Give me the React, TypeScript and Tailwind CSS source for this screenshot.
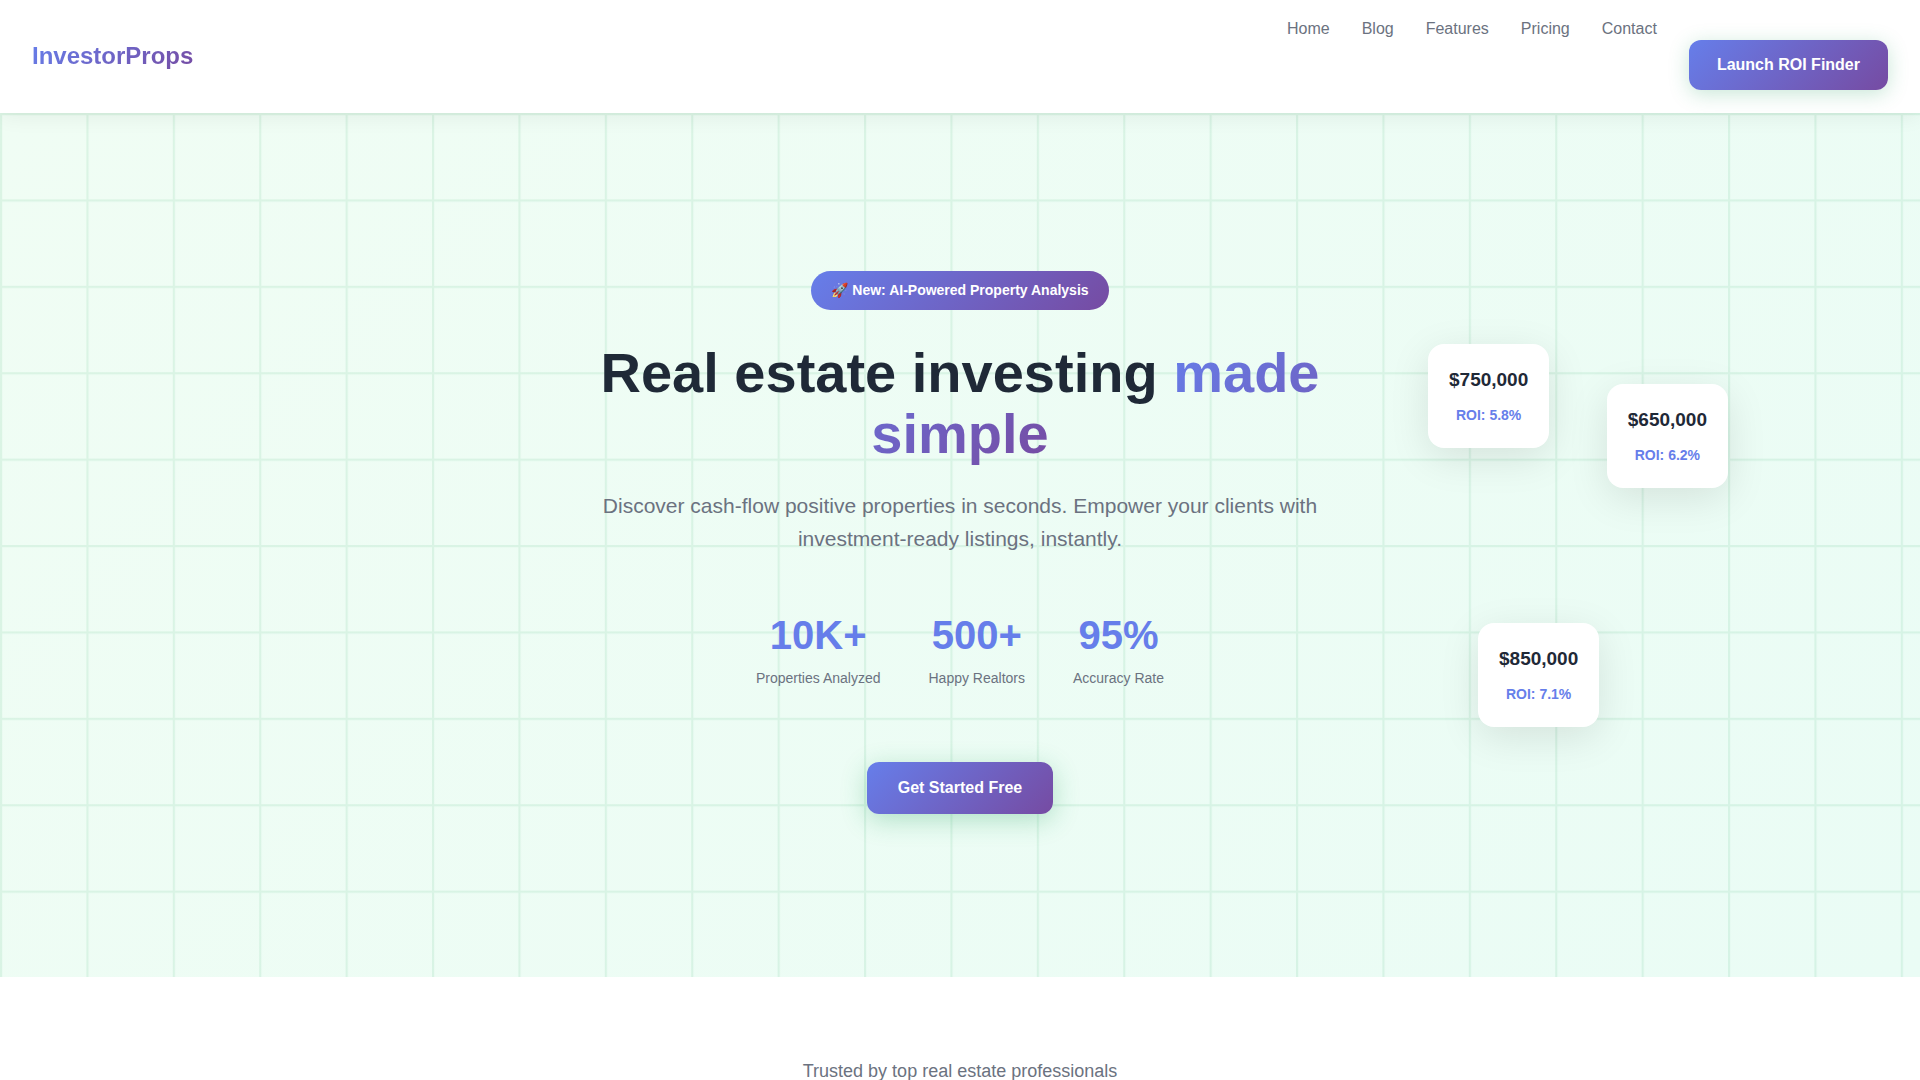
const navLinks = ["Home", "Blog", "Features", "Pricing", "Contact"];

const stats = [
  { value: "10K+", label: "Properties Analyzed" },
  { value: "500+", label: "Happy Realtors" },
  { value: "95%", label: "Accuracy Rate" },
];

const properties = [
  { price: "$750,000", roi: "ROI: 5.8%", place: "left-0 top-0" },
  { price: "$650,000", roi: "ROI: 6.2%", place: "right-0 top-10" },
  { price: "$850,000", roi: "ROI: 7.1%", place: "left-[50px] bottom-0" },
];

function Header() {
  return (
    <header className="relative z-10 flex items-center justify-between bg-white px-8 py-4 shadow-[0_4px_20px_rgba(0,0,0,0.06)]">
      <a
        href="#"
        className="bg-[linear-gradient(135deg,#667eea,#764ba2)] bg-clip-text pb-0.5 text-2xl font-bold text-transparent"
      >
        InvestorProps
      </a>
      <nav>
        <ul className="flex items-start gap-8">
          {navLinks.map((label) => (
            <li key={label}>
              <a href="#" className="block text-base leading-[26px] text-[#6b7280]">
                {label}
              </a>
            </li>
          ))}
          <li>
            <button
              type="button"
              className="mt-6 mb-[7px] block rounded-xl bg-[linear-gradient(135deg,#667eea,#764ba2)] px-7 py-3 text-base leading-[26px] font-semibold text-white shadow-[0_4px_20px_rgba(34,160,94,0.25)]"
            >
              Launch ROI Finder
            </button>
          </li>
        </ul>
      </nav>
    </header>
  );
}

/* Faint square grid; ten cells always fit the height of the hero. */
function GridBackdrop() {
  return (
    <svg
      aria-hidden="true"
      viewBox="0 0 100 100"
      preserveAspectRatio="xMinYMin meet"
      className="absolute inset-0 h-full w-full"
    >
      <defs>
        <pattern id="grid" width="10" height="10" patternUnits="userSpaceOnUse">
          <path d="M10 0H0V10" fill="none" stroke="#22a55e" strokeOpacity="0.1" strokeWidth="0.5" />
        </pattern>
      </defs>
      <rect width="1000" height="100" fill="url(#grid)" />
    </svg>
  );
}

function Hero() {
  return (
    <section className="relative flex min-h-[80vh] items-center justify-center overflow-hidden bg-[linear-gradient(135deg,#f0fdf4,#eafcf5)] pb-[5px]">
      <GridBackdrop />
      <div className="relative flex max-w-[800px] flex-col items-center text-center">
        <p className="rounded-full bg-[linear-gradient(135deg,#667eea,#764ba2)] px-5 py-2 text-[14px] leading-[23px] font-semibold text-white">
          🚀 New: AI-Powered Property Analysis
        </p>
        <h1 className="mt-8 text-[56px] leading-[61px] font-bold text-[#1f2937]">
          Real estate investing{" "}
          <span className="bg-[linear-gradient(135deg,#667eea,#764ba2)] bg-clip-text text-transparent">
            made simple
          </span>
        </h1>
        <p className="mt-[25px] text-[21px] leading-[33px] text-[#6b7280]">
          Discover cash-flow positive properties in seconds. Empower your clients with investment-ready listings,
          instantly.
        </p>
        <dl className="mt-12 flex gap-12">
          {stats.map((stat) => (
            <div key={stat.label} className="flex flex-col-reverse">
              <dt className="text-[14px] leading-[23px] text-[#6b7280]">{stat.label}</dt>
              <dd className="text-[40px] leading-[64px] font-bold text-[#667eea]">{stat.value}</dd>
            </div>
          ))}
        </dl>
        <button
          type="button"
          className="mt-[72px] rounded-xl bg-[linear-gradient(135deg,#667eea,#764ba2)] px-[31px] py-[13px] text-base leading-[26px] font-semibold text-white shadow-[0_6px_26px_rgba(34,160,94,0.3)]"
        >
          Get Started Free
        </button>
      </div>
      <ul className="absolute top-[231px] right-[10%] h-[383px] w-[300px]">
        {properties.map((item) => (
          <li
            key={item.price}
            className={`absolute rounded-2xl bg-white px-[21px] py-5 text-center font-semibold shadow-[0_10px_40px_rgba(0,0,0,0.1)] ${item.place}`}
          >
            <p className="text-[19px] leading-[31px] text-[#1f2937]">{item.price}</p>
            <p className="mt-[9px] mb-px text-[14px] leading-[23px] text-[#667eea]">{item.roi}</p>
          </li>
        ))}
      </ul>
    </section>
  );
}

export default function App() {
  return (
    <div className="h-screen overflow-hidden bg-white font-['Liberation_Sans',Arial,sans-serif]">
      <Header />
      <Hero />
      <section className="py-20 text-center">
        <p className="text-[18px] leading-7 text-[#6b7280]">Trusted by top real estate professionals</p>
      </section>
    </div>
  );
}
